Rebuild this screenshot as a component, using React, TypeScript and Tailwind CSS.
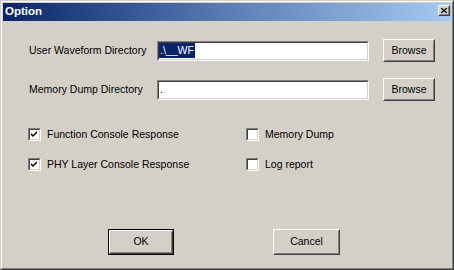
import React from "react";

function Raised({ className, children }: { className?: string; children?: React.ReactNode }) {
  return (
    <div className={"border border-t-white border-l-white border-r-[#404040] border-b-[#404040] bg-[#d4d0c8] " + (className || "")}>
      <div className="w-full h-full border border-t-[#d4d0c8] border-l-[#d4d0c8] border-r-[#808080] border-b-[#808080] flex items-center justify-center">
        {children}
      </div>
    </div>
  );
}

function Sunken({ className, children }: { className?: string; children?: React.ReactNode }) {
  return (
    <div className={"border border-t-[#808080] border-l-[#808080] border-r-white border-b-white " + (className || "")}>
      <div className="w-full h-full border border-t-[#404040] border-l-[#404040] border-r-[#d4d0c8] border-b-[#d4d0c8] bg-white flex items-center">
        {children}
      </div>
    </div>
  );
}

function Check({ label, checked }: { label: string; checked?: boolean }) {
  return (
    <div className="flex items-center h-[13px]">
      <Sunken className="w-[13px] h-[13px] shrink-0">
        {checked && (
          <svg width="9" height="9" viewBox="0 0 9 9" className="block">
            <path d="M1 3 L1 5 L3 7 L7 3 L7 1 L3 5 Z" fill="#000" />
          </svg>
        )}
      </Sunken>
      <span className="ml-[6px] leading-none">{label}</span>
    </div>
  );
}

export default function App() {
  return (
    <div className="w-[454px] h-[270px] border border-t-[#d4d0c8] border-l-[#d4d0c8] border-r-[#404040] border-b-[#404040] font-['Liberation_Sans',Arial,sans-serif] text-[10.5px] text-black">
      <div className="h-full border border-t-white border-l-white border-r-[#808080] border-b-[#808080] bg-[#d4d0c8] flex flex-col">
        <div className="mx-[1px] mt-[1px] h-[18px] bg-gradient-to-r from-[#0a246a] via-[#5a7db4] to-[#a6caf0] flex items-start justify-between">
          <span className="ml-[2px] mt-[3px] text-white font-bold text-[11.5px] leading-none">Option</span>
          <Raised className="w-[12px] h-[11px] mt-[2px] mr-[1px]">
            <svg width="6" height="5" viewBox="0 0 6 5" className="block">
              <path d="M0 0 L6 5 M6 0 L0 5" stroke="#000" strokeWidth="1.3" />
            </svg>
          </Raised>
        </div>

        <div className="flex flex-col pl-[26px]">
          <div className="flex items-center h-[23px] mt-[18px]">
            <span className="w-[129px] pl-[1px]">User Waveform Directory</span>
            <Sunken className="w-[212px] h-[20px]">
              <span className="bg-[#0a246a] text-white h-[15px] leading-[15px] px-[1px]">.\__WF</span>
            </Sunken>
            <Raised className="w-[52px] h-[23px] ml-[14px]">Browse</Raised>
          </div>
          <div className="flex items-center h-[23px] mt-[16px]">
            <span className="w-[129px] pl-[1px]">Memory Dump Directory</span>
            <Sunken className="w-[212px] h-[20px]">
              <span className="pl-[1px]">.</span>
            </Sunken>
            <Raised className="w-[52px] h-[23px] ml-[14px]">Browse</Raised>
          </div>

          <div className="flex mt-[27px]">
            <div className="w-[218px] flex flex-col gap-[17px]">
              <Check label="Function Console Response" checked />
              <Check label="PHY Layer Console Response" checked />
            </div>
            <div className="flex flex-col gap-[17px]">
              <Check label="Memory Dump" />
              <Check label="Log report" />
            </div>
          </div>

          <div className="flex mt-[58px]">
            <div className="ml-[80px] w-[66px] h-[26px] border border-black">
              <Raised className="w-full h-full">OK</Raised>
            </div>
            <Raised className="ml-[99px] w-[67px] h-[26px]">Cancel</Raised>
          </div>
        </div>
      </div>
    </div>
  );
}
